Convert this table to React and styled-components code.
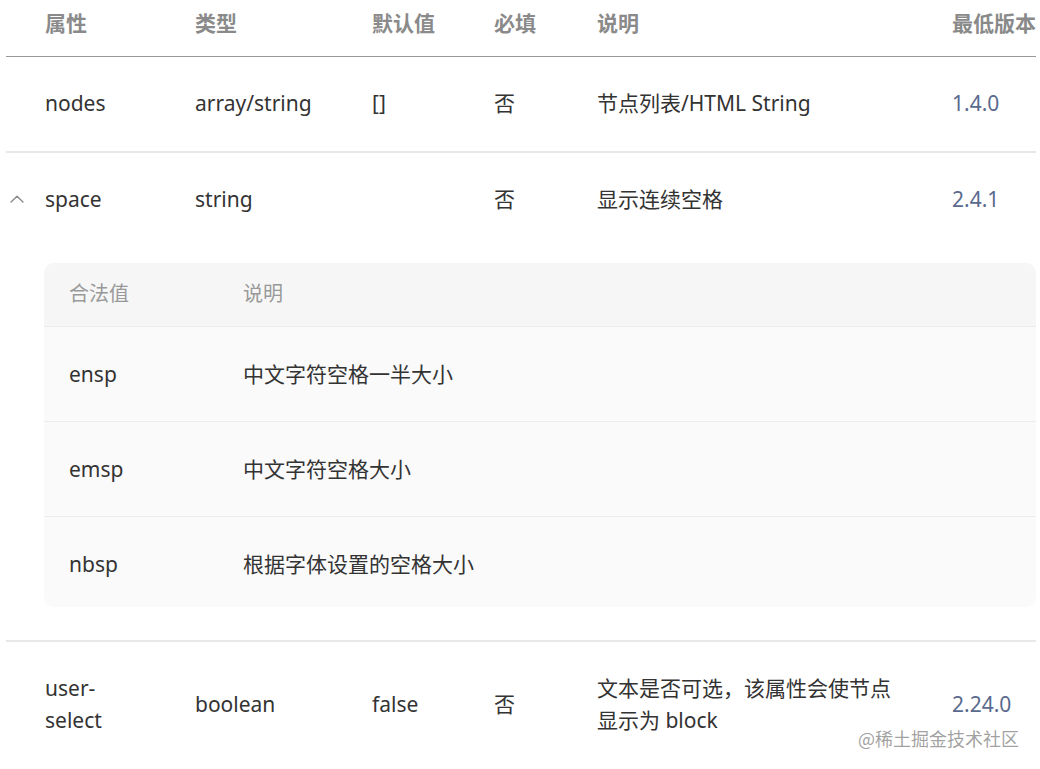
import React from "react";
import styled, { createGlobalStyle } from "styled-components";

const Global = createGlobalStyle`
  html, body { margin: 0; padding: 0; background: #fff; }
  body {
    font-family: "Noto Sans", "Noto Sans CJK SC", sans-serif;
    color: #333;
    overflow: hidden;
  }
`;

const Page = styled.div`
  position: relative;
  width: 1040px;
  height: 769px;
  overflow: hidden;
`;

const Table = styled.div`
  width: 1030px;
  margin-left: 6px;
`;

const cols = "39px 150px 177px 122px 103px 355px 84px";

const HeaderRow = styled.div`
  display: grid;
  grid-template-columns: ${cols};
  padding: 7px 0 17px;
  border-bottom: 1px solid #999;
`;

const HeadCell = styled.div`
  grid-column: ${(p) => p.$col};
  font-size: 21px;
  line-height: 32px;
  font-weight: 700;
  color: #8a8a8a;
  white-space: nowrap;
`;

const Row = styled.div`
  border-bottom: ${(p) => (p.$last ? "none" : "2px solid #e8e8e8")};
`;

const MainLine = styled.div`
  display: grid;
  grid-template-columns: ${cols};
  align-items: center;
  padding: 30px 0 32px;
`;

const Cell = styled.div`
  font-size: 21px;
  line-height: 32px;
  color: ${(p) => (p.$version ? "#5a6a8e" : "#333")};
  max-width: ${(p) => p.$max || "none"};
`;

const Toggle = styled.div`
  display: flex;
  align-items: center;
  justify-content: flex-start;
  padding-left: 4px;
  height: 32px;
`;

const Expand = styled.div`
  padding: 16px 0 33px 38px;
`;

const SubTable = styled.div`
  background: #fafafa;
  border-radius: 10px;
  overflow: hidden;
`;

const subCols = "25px 174px 1fr";

const SubHead = styled.div`
  display: grid;
  grid-template-columns: ${subCols};
  align-items: center;
  padding: 15px 0 16px;
  background: #f6f6f6;
  border-bottom: 1px solid #ececec;
`;

const SubHeadCell = styled.div`
  grid-column: ${(p) => p.$col};
  font-size: 20px;
  line-height: 32px;
  color: #999;
`;

const SubRow = styled.div`
  display: grid;
  grid-template-columns: ${subCols};
  align-items: center;
  padding: 31px 0;
  border-bottom: ${(p) => (p.$last ? "none" : "1px solid #ededed")};
  ${(p) => p.$last && "padding-bottom: 27px;"}
`;

const SubCell = styled.div`
  grid-column: ${(p) => p.$col};
  font-size: 21px;
  line-height: 32px;
  color: #333;
`;

const Watermark = styled.div`
  position: absolute;
  left: 858px;
  top: 726px;
  font-size: 18px;
  line-height: 24px;
  color: rgba(130, 130, 130, 0.75);
  white-space: nowrap;
  font-family: "Noto Sans CJK SC", sans-serif;
`;

const Chevron = () => (
  <svg width="14" height="8" viewBox="0 0 14 8" fill="none">
    <path d="M1 7 L7 1.2 L13 7" stroke="#8a8a8a" strokeWidth="1.4" strokeLinecap="round" strokeLinejoin="round" />
  </svg>
);

const headers = ["属性", "类型", "默认值", "必填", "说明", "最低版本"];

const subRows = [
  ["ensp", "中文字符空格一半大小"],
  ["emsp", "中文字符空格大小"],
  ["nbsp", "根据字体设置的空格大小"],
];

export default function App() {
  return (
    <Page>
      <Global />
      <Table>
        <HeaderRow>
          {headers.map((h, i) => (
            <HeadCell key={h} $col={i + 2}>{h}</HeadCell>
          ))}
        </HeaderRow>

        <Row>
          <MainLine>
            <div />
            <Cell>nodes</Cell>
            <Cell>array/string</Cell>
            <Cell>[]</Cell>
            <Cell>否</Cell>
            <Cell>节点列表/HTML String</Cell>
            <Cell $version>1.4.0</Cell>
          </MainLine>
        </Row>

        <Row>
          <MainLine>
            <Toggle><Chevron /></Toggle>
            <Cell>space</Cell>
            <Cell>string</Cell>
            <Cell />
            <Cell>否</Cell>
            <Cell>显示连续空格</Cell>
            <Cell $version>2.4.1</Cell>
          </MainLine>
          <Expand>
            <SubTable>
              <SubHead>
                <SubHeadCell $col={2}>合法值</SubHeadCell>
                <SubHeadCell $col={3}>说明</SubHeadCell>
              </SubHead>
              {subRows.map(([v, d], i) => (
                <SubRow key={v} $last={i === subRows.length - 1}>
                  <SubCell $col={2}>{v}</SubCell>
                  <SubCell $col={3}>{d}</SubCell>
                </SubRow>
              ))}
            </SubTable>
          </Expand>
        </Row>

        <Row $last>
          <MainLine>
            <div />
            <Cell $max="96px">user-select</Cell>
            <Cell>boolean</Cell>
            <Cell>false</Cell>
            <Cell>否</Cell>
            <Cell $max="305px">文本是否可选，该属性会使节点显示为 block</Cell>
            <Cell $version>2.24.0</Cell>
          </MainLine>
        </Row>
      </Table>
      <Watermark>@稀土掘金技术社区</Watermark>
    </Page>
  );
}
